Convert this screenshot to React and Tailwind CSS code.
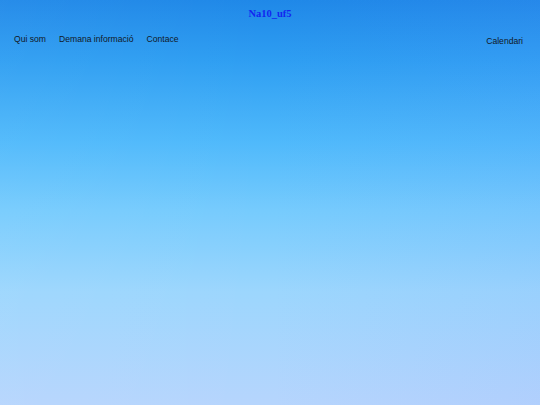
export default function App() {
  return (
    <div className="relative w-[540px] h-[405px] overflow-hidden bg-[linear-gradient(180deg,#1f88e8_0%,#2e9ef2_15%,#4fb9fb_35%,#76cbfd_52%,#9cd6fd_72%,#b6d5fd_100%)]">
      <div className="absolute inset-0 bg-[linear-gradient(90deg,rgba(255,255,255,0.04)_0%,rgba(255,255,255,0)_50%,rgba(120,140,255,0.08)_100%)]" />
      <div className="relative flex flex-col">
        <h1 className="text-center pt-[7px] text-[10.5px] leading-[14px] font-bold text-[#1226f0] font-['Liberation_Serif',serif]">
          Na10_uf5
        </h1>
        <div className="flex items-start justify-between pl-[14px] pr-[17px] mt-[12px] font-['Liberation_Sans',sans-serif] text-[8.6px] leading-[12px] text-[#111827]">
          <nav className="flex gap-[13px]">
            <span>Qui som</span>
            <span>Demana informació</span>
            <span>Contace</span>
          </nav>
          <span className="mt-[2px]">Calendari</span>
        </div>
      </div>
    </div>
  );
}
